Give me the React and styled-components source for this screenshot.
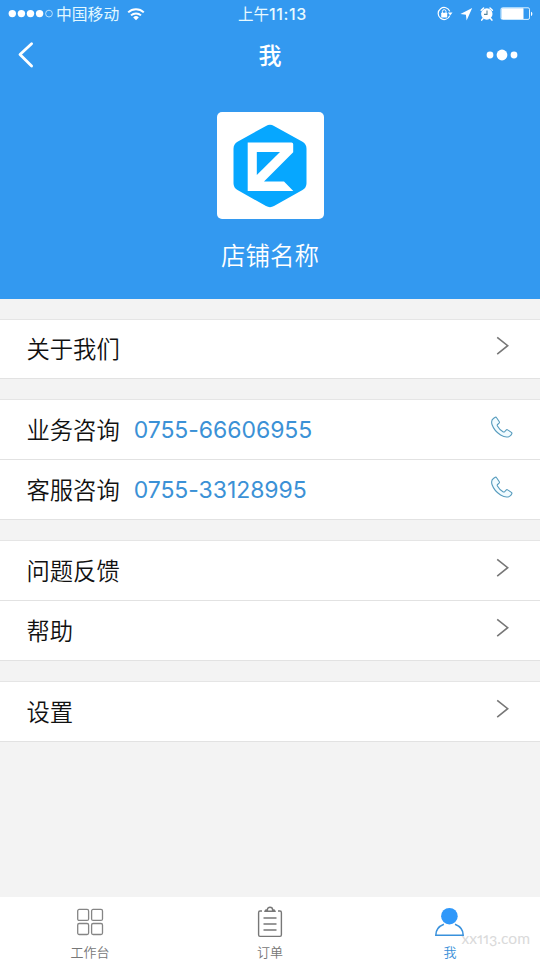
import React from 'react'
import styled, { createGlobalStyle } from 'styled-components'

const BLUE = '#3399f0'

const App = () => {
    return (
        <Screen>
            <GlobalStyle />
            <Header>
                <StatusBar>
                    <StatusLeft>
                        <SignalDots />
                        <Carrier>中国移动</Carrier>
                        <WifiIcon />
                    </StatusLeft>
                    <Clock>上午<span>11:13</span></Clock>
                    <StatusRight>
                        <StatusIcons />
                    </StatusRight>
                </StatusBar>
                <NavBar>
                    <BackIcon />
                    <Title>我</Title>
                    <MoreIcon />
                </NavBar>
                <Profile>
                    <LogoBox>
                        <Logo />
                    </LogoBox>
                    <ShopName>店铺名称</ShopName>
                </Profile>
            </Header>
            <Group>
                <Row $height={58}>
                    <Label>关于我们</Label>
                    <Chevron />
                </Row>
            </Group>
            <Group>
                <Row>
                    <Label>业务咨询</Label>
                    <Phone>0755-66606955</Phone>
                    <PhoneIcon />
                </Row>
                <Row>
                    <Label>客服咨询</Label>
                    <Phone>0755-33128995</Phone>
                    <PhoneIcon />
                </Row>
            </Group>
            <Group>
                <Row>
                    <Label>问题反馈</Label>
                    <Chevron />
                </Row>
                <Row>
                    <Label>帮助</Label>
                    <Chevron />
                </Row>
            </Group>
            <Group>
                <Row>
                    <Label>设置</Label>
                    <Chevron />
                </Row>
            </Group>
            <TabBar>
                <Tab>
                    <GridIcon />
                    <TabText>工作台</TabText>
                </Tab>
                <Tab>
                    <ClipboardIcon />
                    <TabText>订单</TabText>
                </Tab>
                <Tab $active>
                    <UserIcon />
                    <TabText>我</TabText>
                </Tab>
                <Watermark>xx113.com</Watermark>
            </TabBar>
        </Screen>
    )
}

export default App

const SignalDots = () => (
    <svg width="46" height="10" viewBox="0 0 46 10" fill="#fff">
        <circle cx="4.3" cy="4.6" r="3.7" />
        <circle cx="13.4" cy="4.6" r="3.7" />
        <circle cx="22.5" cy="4.6" r="3.7" />
        <circle cx="31.6" cy="4.6" r="3.7" />
        <circle cx="41" cy="4.6" r="3.4" fill="none" stroke="#d6f0ff" strokeWidth="0.8" />
    </svg>
)

const WifiIcon = () => (
    <svg width="18" height="13" viewBox="0 0 18 13" fill="none" stroke="#fff" strokeWidth="2">
        <path d="M1.2 4.4a11.2 11.2 0 0 1 15.6 0" />
        <path d="M4 7.4a7.2 7.2 0 0 1 10 0" />
        <path d="M9 12.2 6.2 9.4a4 4 0 0 1 5.6 0z" fill="#fff" stroke="none" />
    </svg>
)

const StatusIcons = () => (
    <svg width="98" height="16" viewBox="0 0 98 16">
        <path d="M12.8 9.6a6 6 0 1 1 0-4.2" fill="none" stroke="#fff" strokeWidth="1.2" />
        <path d="M10.9 6.4h4.6l-2.3 3z" fill="#fff" />
        <rect x="4.2" y="6.8" width="6" height="4.6" rx="0.5" fill="#fff" />
        <path d="M5.4 7V5.5a1.8 1.8 0 0 1 3.6 0V7" fill="none" stroke="#fff" strokeWidth="1" />
        <path d="M35.2 2 23.4 8l5.5.8.7 5.8z" fill="#fff" />
        <circle cx="49.8" cy="8" r="5.7" fill="#fff" />
        <path d="M44.2 4.2 46.6 2M55.4 4.2 53 2M46 12.6l-1.3 1.5M53.6 12.6l1.3 1.5" stroke="#fff" strokeWidth="1.5" strokeLinecap="round" />
        <path d="M50 4.6v3.8h-3" fill="none" stroke="#55859d" strokeWidth="1.1" />
        <rect x="64" y="1.8" width="28.5" height="11.6" rx="1.5" fill="none" stroke="#d9f1ff" strokeWidth="1" />
        <rect x="64.5" y="2.3" width="22" height="10.6" rx="0.5" fill="#fff" />
        <path d="M94 5.7c1.8.5 1.8 3.7 0 4.2z" fill="#fff" />
    </svg>
)

const BackIcon = () => (
    <svg width="18" height="28" viewBox="0 0 18 28" fill="none" stroke="#fff" strokeWidth="2.8" strokeLinecap="round" strokeLinejoin="round">
        <path d="M14.6 2.8 3 13.6 14.6 25" />
    </svg>
)

const MoreIcon = () => (
    <svg width="32" height="12" viewBox="0 0 32 12" fill="#fff">
        <circle cx="4" cy="6" r="3.4" />
        <circle cx="16" cy="6" r="5.4" />
        <circle cx="28" cy="6" r="3.4" />
    </svg>
)

const Logo = () => (
    <svg width="74" height="84" viewBox="0 0 74 84">
        <path d="M33 1.9q4-2.3 8 0l28.5 15.8q4 2.4 4 7v34.6q0 4.4-4 6.7l-28.5 16q-4 2.3-8 0l-28.5-16q-4-2.3-4-6.7V24.7q0-4.6 4-7z" fill="#06a7ff" />
        <path d="M14.7 18.5h43.8q1.7 0 1.7 1.7v8L31 57.6h20l9.3 9.4H14.7z" fill="#fff" />
        <path d="M23.8 28H47L23.8 51z" fill="#06a7ff" />
    </svg>
)

const Chevron = () => (
    <ChevronSvg width="14" height="20" viewBox="0 0 14 20" fill="none" stroke="#777" strokeWidth="1.6">
        <path d="M1.2 1.3 11.7 9.7 1.2 18.2" />
    </ChevronSvg>
)

const PhoneIcon = () => (
    <PhoneSvg width="24" height="24" viewBox="0 0 24 24" fill="#f1fbff" stroke="#569bbd" strokeWidth="1.1" strokeLinejoin="round">
        <path d="M3.7 2.3 5.3 1.3q.8-.4 1.3.4l2.7 4q.5.8-.2 1.5L7.6 8.5q-.6.6-.2 1.4 2.1 3.8 5.9 6 .8.4 1.4-.2l1.5-1.7q.7-.7 1.5-.1l3.7 2.5q.8.6.4 1.3-.8 1.7-2.4 2.7-3.6 1.7-8.8-1.4-6.3-3.9-8.5-10.2-1.5-4.6 1.6-6.5z" />
    </PhoneSvg>
)

const GridIcon = () => (
    <svg width="28" height="32" viewBox="0 0 28 32" fill="none" stroke="#858585" strokeWidth="1.3">
        <rect x="1.7" y="3.4" width="10.9" height="11" rx="1.5" />
        <rect x="15.6" y="3.4" width="10.9" height="11" rx="1.5" />
        <rect x="1.7" y="17.5" width="10.9" height="11" rx="1.5" />
        <rect x="15.6" y="17.5" width="10.9" height="11" rx="1.5" />
    </svg>
)

const ClipboardIcon = () => (
    <svg width="28" height="32" viewBox="0 0 28 32" fill="none" stroke="#777" strokeWidth="1.4">
        <path d="M6 5H4Q2.6 5 2.6 6.7v22q0 1.7 1.4 1.7h20q1.4 0 1.4-1.7v-22Q25.4 5 24 5h-2" />
        <path d="M9 5.2q.3-1.5 2.4-1.5c0-3.200 5.200-3.200 5.200 0q2.100 0 2.400 1.500z" />
        <path d="M7.500 12h13M7.500 18h13M7.500 24h13" />
    </svg>
)

const UserIcon = () => (
    <svg width="30" height="32" viewBox="0 0 30 32">
        <path d="M8.9 18.3C3.9 20.3.8 24.3.8 29.2h27.4c0-4.9-3.2-8.9-8.2-10.9" fill="none" stroke="#3991dc" strokeWidth="1.5" />
        <circle cx="14.4" cy="10.2" r="8.3" fill="#2f98fa" />
    </svg>
)

const GlobalStyle = createGlobalStyle`
    body {
        margin: 0;
    }
    * {
        box-sizing: border-box;
    }
    svg {
        display: block;
        flex-shrink: 0;
    }
`

const Screen = styled.div`
    display: flex;
    flex-direction: column;
    width: 540px;
    height: 960px;
    overflow: hidden;
    background: #f3f3f3;
    font-family: Inter, 'Noto Sans CJK SC', sans-serif;
`

const Header = styled.div`
    height: 299px;
    margin-bottom: 20px;
    background: ${BLUE};
    color: #fff;
`

const StatusBar = styled.div`
    display: grid;
    grid-template-columns: 1fr auto 1fr;
    align-items: center;
    height: 27px;
    padding: 0 8px;
`

const StatusLeft = styled.div`
    display: flex;
    align-items: center;
`

const Carrier = styled.span`
    margin: 2px 8px 0 2px;
    font-size: 15.8px;
    font-weight: 400;
    line-height: 26px;
    color: #e2f8ff;
`

const Clock = styled.div`
    margin-left: 5px;
    padding-top: 1px;
    font-size: 15.5px;
    line-height: 26px;
    color: #e8faff;

    span {
        font-size: 16px;
        font-weight: 500;
        letter-spacing: 0.6px;
    }
`

const StatusRight = styled.div`
    display: flex;
    justify-content: flex-end;
    margin-right: -3px;
`

const NavBar = styled.div`
    display: grid;
    grid-template-columns: 32px 1fr 32px;
    align-items: center;
    height: 56px;
    padding: 0 22px 0 17px;
`

const Title = styled.div`
    padding: 1px 0 0 5px;
    font-size: 23px;
    font-weight: 500;
    line-height: 34px;
    text-align: center;
`

const Profile = styled.div`
    display: flex;
    flex-direction: column;
    align-items: center;
    padding-top: 29px;
`

const LogoBox = styled.div`
    display: flex;
    align-items: center;
    justify-content: center;
    width: 107px;
    height: 107px;
    border-radius: 5px;
    background: #fff;
`

const ShopName = styled.div`
    margin-top: 19px;
    font-size: 24.5px;
    font-weight: 350;
    line-height: 36px;
`

const Group = styled.div`
    margin-bottom: 20px;
    border-top: 1px solid #e5e5e5;
`

const Row = styled.div`
    display: flex;
    align-items: center;
    height: ${({ $height = 59 }) => $height + 1}px;
    padding: 0 27px 0 26px;
    border-bottom: 1px solid #e2e2e2;
    background: #fff;
`

const Label = styled.span`
    padding: 2px 0 0 0.5px;
    font-size: 23.3px;
    font-weight: 350;
    line-height: 34px;
    color: #111;
`

const Phone = styled.span`
    margin: 1px 0 0 14px;
    font-size: 23px;
    font-weight: 400;
    line-height: 34px;
    letter-spacing: -0.05px;
    color: #3b91d6;
`

const ChevronSvg = styled.svg`
    margin: 0 3px 6px auto;
`

const PhoneSvg = styled.svg`
    margin: 0 -1px 4px auto;
`

const TabBar = styled.div`
    position: relative;
    display: flex;
    height: 63px;
    margin-top: auto;
    background: #fff;
`

const Tab = styled.div`
    display: flex;
    flex: 1;
    flex-direction: column;
    align-items: center;
    padding-top: 9px;
    color: ${({ $active }) => ($active ? '#398fd8' : '#777')};
`

const TabText = styled.span`
    margin-top: 4px;
    font-size: 13px;
    font-weight: 350;
    line-height: 20px;
`

const Watermark = styled.span`
    position: absolute;
    right: 10px;
    bottom: 12px;
    font-family: Lato, sans-serif;
    font-size: 15.6px;
    font-variant-numeric: oldstyle-nums proportional-nums;
    line-height: 20px;
    color: #dadada;
`
